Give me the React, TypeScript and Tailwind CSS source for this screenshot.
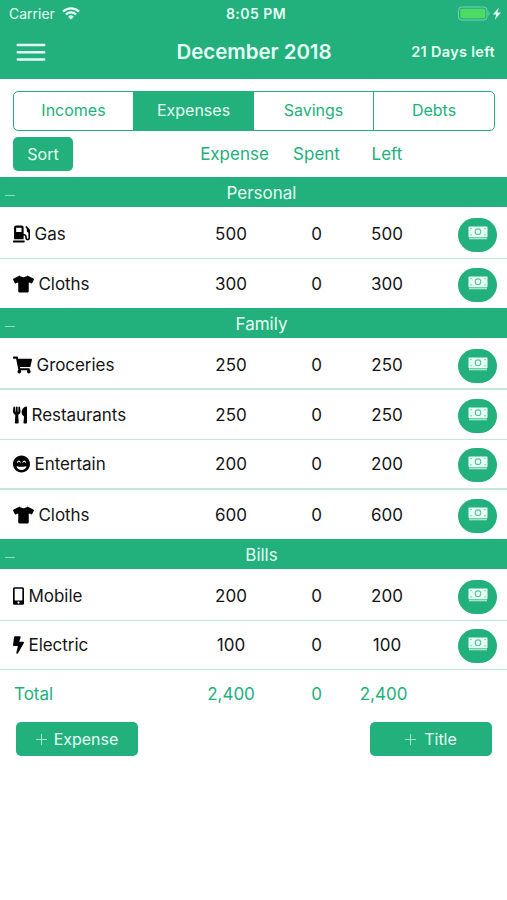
import type { ComponentType, ReactNode } from "react";
import {
  FaBolt,
  FaGasPump,
  FaGrinBeam,
  FaMobileAlt,
  FaShoppingCart,
  FaTshirt,
  FaUtensils,
} from "react-icons/fa";

type IconType = ComponentType<{ className?: string }>;

interface Row {
  icon: IconType;
  iconClass: string;
  name: string;
  amount: string;
  height: string;
}

const sections: { title: string; rows: Row[] }[] = [
  {
    title: "Personal",
    rows: [
      { icon: FaGasPump, iconClass: "w-[17px]", name: "Gas", amount: "500", height: "h-[52px] pt-[3px] border-b" },
      { icon: FaTshirt, iconClass: "w-[21px]", name: "Cloths", amount: "300", height: "h-[49px]" },
    ],
  },
  {
    title: "Family",
    rows: [
      { icon: FaShoppingCart, iconClass: "w-[19px]", name: "Groceries", amount: "250", height: "h-[52px] pt-[4px] border-b-2" },
      { icon: FaUtensils, iconClass: "w-[14px]", name: "Restaurants", amount: "250", height: "h-[50px] border-b" },
      { icon: FaGrinBeam, iconClass: "w-[17px]", name: "Entertain", amount: "200", height: "h-[50px] border-b-2" },
      { icon: FaTshirt, iconClass: "w-[21px]", name: "Cloths", amount: "600", height: "h-[49px]" },
    ],
  },
  {
    title: "Bills",
    rows: [
      { icon: FaMobileAlt, iconClass: "w-[11px]", name: "Mobile", amount: "200", height: "h-[52px] pt-[3px] border-b" },
      { icon: FaBolt, iconClass: "w-[11px]", name: "Electric", amount: "100", height: "h-[49px] border-b" },
    ],
  },
];

function CashIcon() {
  return (
    <svg className="mb-[4px] h-[14px] w-[20px]" viewBox="0 0 20 14">
      <rect x="0.5" y="0.5" width="19" height="10.5" rx="0.6" fill="#e6fff5" />
      <circle cx="10" cy="5.7" r="2.8" fill="none" stroke="#5cc49d" strokeWidth="1.1" />
      <g fill="#6fcba8">
        <circle cx="3" cy="2.5" r="0.8" />
        <circle cx="17" cy="2.5" r="0.8" />
        <circle cx="3" cy="8.8" r="0.8" />
        <circle cx="17" cy="8.8" r="0.8" />
      </g>
      <path d="M1 11.6h18" stroke="#8fd9bc" strokeWidth="0.8" />
      <path d="M1 12.7h18" stroke="#b5ebd5" strokeWidth="1.2" />
    </svg>
  );
}

function Columns({ first, values }: { first: ReactNode; values: ReactNode[] }) {
  return (
    <div className="grid w-full grid-cols-[177px_82px_89px_52px_97px] items-center pl-[13px]">
      <div className="flex items-center">{first}</div>
      {values.map((value, i) => (
        <div key={i} className="flex justify-center">
          {value}
        </div>
      ))}
    </div>
  );
}

function ExpenseRow({ row }: { row: Row }) {
  const Icon = row.icon;
  return (
    <div className={`flex items-center border-[#c3e7da] text-[#151515] ${row.height}`}>
      <div className="grid w-full grid-cols-[177px_82px_89px_52px_97px] items-center pl-[13px]">
        <div className="flex items-center gap-[4.5px]">
          <Icon className={`h-[18px] shrink-0 text-black ${row.iconClass}`} />
          <span className="tracking-[-0.05px]">{row.name}</span>
        </div>
        <div className="text-center">{row.amount}</div>
        <div className="text-center">0</div>
        <div className="text-center">{row.amount}</div>
        <div className="flex justify-end pr-[13px]">
          <button className="mt-[2px] flex h-[34px] w-[39px] items-center justify-center rounded-[17px] bg-[#22b07c]">
            <CashIcon />
          </button>
        </div>
      </div>
    </div>
  );
}

function PlusIcon() {
  return (
    <svg className="size-[11px]" viewBox="0 0 11 11" stroke="#a5e6cc">
      <path d="M5.5 0v11M0 5.5h11" />
    </svg>
  );
}

export default function App() {
  return (
    <div className="h-[900px] w-[507px] overflow-hidden bg-white font-['Inter','Noto_Sans',sans-serif] text-[17px] leading-6 text-[#22b07c]">
      <header className="h-[79px] bg-[#22b07c] text-[#e6fff5]">
        <div className="grid h-[27px] grid-cols-3 items-center pl-[9px] pr-[6px] text-[14px]">
          <div className="flex items-center gap-[7px]">
            <span>Carrier</span>
            <svg className="h-[13px] w-[18px]" viewBox="0 0 18 13" fill="none" stroke="currentColor" strokeWidth="2.3">
              <path d="M1 4.6a11.4 11.4 0 0 1 16 0M3.9 7.5a7.3 7.3 0 0 1 10.2 0" />
              <path d="M9 12.6 6.1 9.7a4.1 4.1 0 0 1 5.8 0Z" fill="currentColor" stroke="none" />
            </svg>
          </div>
          <span className="pl-[2px] text-center font-semibold tracking-[0.45px]">8:05 PM</span>
          <div className="flex items-center justify-end">
            <svg className="h-[15px] w-[44px]" viewBox="0 0 44 15">
              <rect x="1.5" y="1" width="28.5" height="13" rx="3.2" fill="none" stroke="#79d3ae" />
              <rect x="3.3" y="2.8" width="25" height="9.4" rx="1.5" fill="#4cdb63" />
              <path d="M31.5 5.3q2 2.2 0 4.4Z" fill="#8bdcbb" />
              <path d="M42 1.5 35.8 8.4h3.4l-1.2 5.4 5.8-7.4h-3.4Z" fill="currentColor" />
            </svg>
          </div>
        </div>
        <div className="grid h-[50px] grid-cols-[120px_1fr_120px] items-center pl-4 pr-[12px]">
          <button>
            <svg className="h-[20px] w-[30px]" viewBox="0 0 30 20" stroke="currentColor" strokeWidth="2.5" strokeLinecap="round">
              <path d="M1.8 3h26.4M1.8 10.2h26.4M1.8 17.4h26.4" />
            </svg>
          </button>
          <h1 className="pr-[3px] text-center text-[20.5px] font-semibold tracking-[-0.05px]">December 2018</h1>
          <span className="whitespace-nowrap text-right text-[14.5px] font-semibold leading-[22px] tracking-[0.3px]">21 Days left</span>
        </div>
      </header>

      <div className="ml-[13px] mr-3 mt-3 grid h-10 grid-cols-4 overflow-hidden rounded-[5px] border border-[#22b07c] text-[16px] leading-[36px]">
        <button className="border-r border-[#22b07c] pb-[2px]">Incomes</button>
        <button className="border-r border-[#22b07c] bg-[#22b07c] pb-[2px] text-[#e6fff5]">Expenses</button>
        <button className="border-r border-[#22b07c] pb-[2px]">Savings</button>
        <button className="pb-[2px]">Debts</button>
      </div>

      <div className="flex h-[46px] items-center">
        <Columns
          first={
            <button className="h-[34px] w-[60px] rounded-[5px] bg-[#22b07c] text-[16px] text-[#e6fff5]">Sort</button>
          }
          values={[
            <span key="expense" className="pl-[7px]">Expense</span>,
            "Spent",
            "Left",
          ]}
        />
      </div>

      {sections.map((section) => (
        <section key={section.title}>
          <div className="flex h-[30px] items-center bg-[#22b07c] pl-[5px] text-[#e6fff5]">
            <span className="mt-[6px] h-px w-[10px] bg-[#8bdcbb]" />
            <h2 className="flex-1 pl-px pt-px text-center">{section.title}</h2>
          </div>
          {section.rows.map((row, i) => (
            <ExpenseRow key={i} row={row} />
          ))}
        </section>
      ))}

      <div className="flex h-[47px] items-center">
        <Columns
          first={<span className="pl-px">Total</span>}
          values={[
            "2,400",
            "0",
            <span key="left" className="pr-[7px]">2,400</span>,
          ]}
        />
      </div>

      <div className="flex justify-between pl-4 pr-[15px] pt-[5px] text-[16px] text-[#e6fff5]">
        <button className="flex h-[34px] w-[122px] items-center justify-center gap-[7px] rounded-[5px] bg-[#22b07c]">
          <PlusIcon />
          Expense
        </button>
        <button className="flex h-[34px] w-[122px] items-center justify-center gap-[8px] rounded-[5px] bg-[#22b07c]">
          <PlusIcon />
          Title
        </button>
      </div>
    </div>
  );
}
